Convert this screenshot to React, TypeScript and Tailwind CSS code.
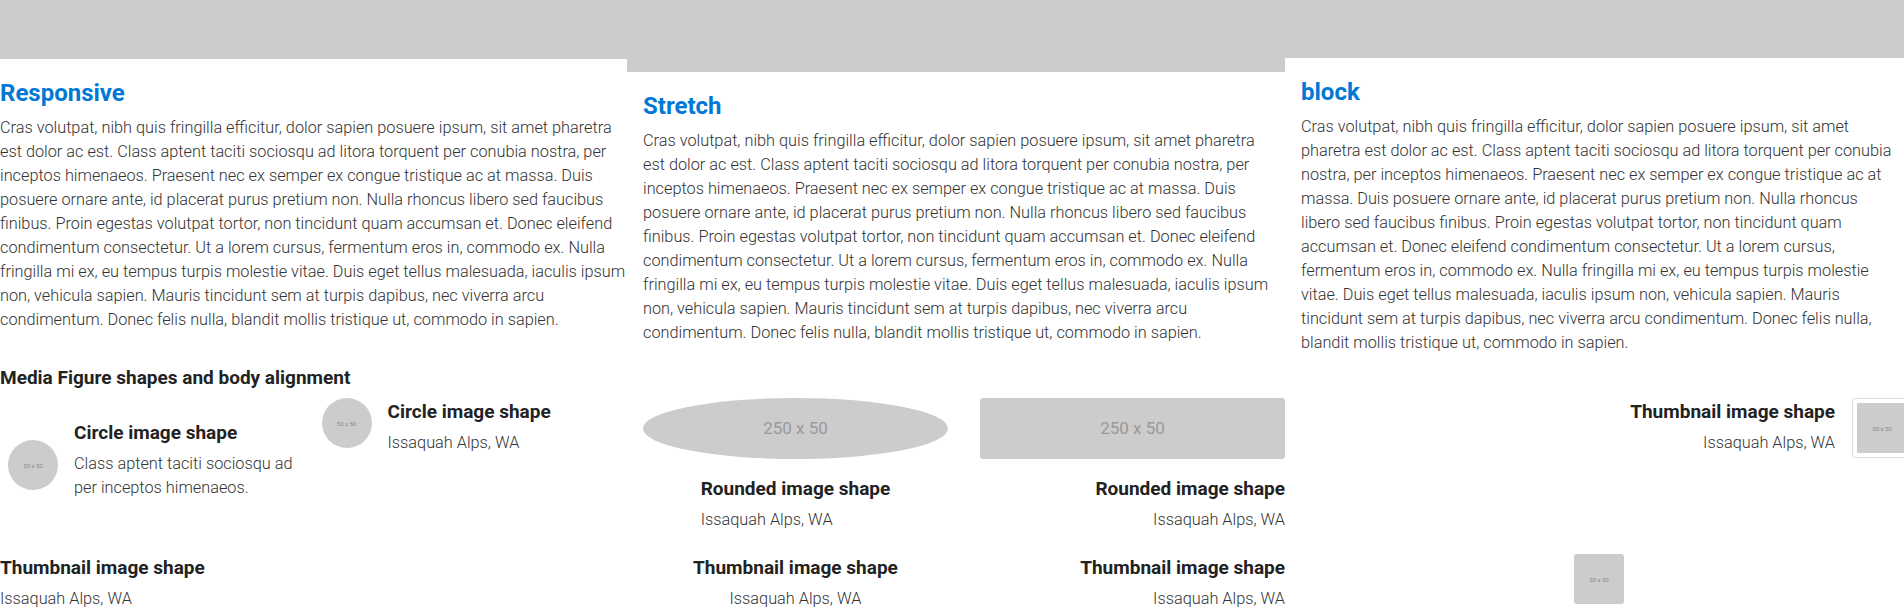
import React from "react";

const PARA =
  "Cras volutpat, nibh quis fringilla efficitur, dolor sapien posuere ipsum, sit amet pharetra est dolor ac est. Class aptent taciti sociosqu ad litora torquent per conubia nostra, per inceptos himenaeos. Praesent nec ex semper ex congue tristique ac at massa. Duis posuere ornare ante, id placerat purus pretium non. Nulla rhoncus libero sed faucibus finibus. Proin egestas volutpat tortor, non tincidunt quam accumsan et. Donec eleifend condimentum consectetur. Ut a lorem cursus, fermentum eros in, commodo ex. Nulla fringilla mi ex, eu tempus turpis molestie vitae. Duis eget tellus malesuada, iaculis ipsum non, vehicula sapien. Mauris tincidunt sem at turpis dapibus, nec viverra arcu condimentum. Donec felis nulla, blandit mollis tristique ut, commodo in sapien.";

function Title({ children }: { children: React.ReactNode }) {
  return (
    <h2 className="mt-[20px] text-[24px] leading-[29px] font-bold text-[#0078d4]">
      {children}
    </h2>
  );
}

function Para() {
  return <p className="mt-[8px] text-[16.3px] leading-[24px] font-light text-[#333]">{PARA}</p>;
}

function MTitle({ children }: { children: React.ReactNode }) {
  return <div className="text-[19px] leading-[28px] font-bold text-[#222]">{children}</div>;
}

function MText({ children }: { children: React.ReactNode }) {
  return <div className="mt-[5px] text-[16.3px] leading-[24px] font-light text-[#333]">{children}</div>;
}

function Small50({ className }: { className: string }) {
  return (
    <div className={"flex shrink-0 items-center justify-center bg-[#ccc] text-[6px] text-[#8a8a8a] " + className}>
      50 x 50
    </div>
  );
}

export default function App() {
  return (
    <div className="w-full overflow-hidden bg-white font-[Roboto,sans-serif] text-[#333]">
      <div className="grid grid-cols-[627px_658px_619px]">
        {/* Row 1 */}
        <div>
          <div className="h-[59px] bg-[#ccc]" />
          <Title>Responsive</Title>
          <Para />
        </div>
        <div>
          <div className="h-[72px] bg-[#ccc]" />
          <div className="px-4">
            <Title>Stretch</Title>
            <Para />
          </div>
        </div>
        <div>
          <div className="h-[58px] bg-[#ccc]" />
          <div className="pl-4 pr-[6px]">
            <Title>block</Title>
            <Para />
          </div>
        </div>

        {/* Row 2 */}
        <div className="col-start-1 mt-[9px] pb-[6px]">
          <h3 className="text-[19px] leading-[28px] font-bold text-[#222]">
            Media Figure shapes and body alignment
          </h3>
        </div>

        {/* Row 3 */}
        <div className="col-start-1 grid grid-cols-2">
          <div className="flex items-start">
            <Small50 className="ml-2 mr-4 mt-[42px] h-[50px] w-[50px] rounded-full" />
            <div className="mt-[21px] flex-1">
              <MTitle>Circle image shape</MTitle>
              <MText>Class aptent taciti sociosqu ad per inceptos himenaeos.</MText>
            </div>
          </div>
          <div className="flex items-start">
            <Small50 className="ml-2 mr-4 h-[50px] w-[50px] rounded-full" />
            <div className="flex-1">
              <MTitle>Circle image shape</MTitle>
              <MText>Issaquah Alps, WA</MText>
            </div>
          </div>
        </div>
        <div className="pl-4">
          <div className="grid grid-cols-2">
            <div className="flex w-[95%] flex-col items-center">
              <div className="flex h-[61px] w-full items-center justify-center rounded-[50%] bg-[#ccc] text-[17px] text-[#999]">
                250 x 50
              </div>
              <div className="mt-4 text-left">
                <MTitle>Rounded image shape</MTitle>
                <MText>Issaquah Alps, WA</MText>
              </div>
            </div>
            <div className="flex flex-col items-end">
              <div className="flex h-[61px] w-[95%] items-center justify-center rounded-[3px] bg-[#ccc] text-[17px] text-[#999]">
                250 x 50
              </div>
              <div className="mt-4 text-right">
                <MTitle>Rounded image shape</MTitle>
                <MText>Issaquah Alps, WA</MText>
              </div>
            </div>
          </div>
        </div>
        <div className="pl-4">
          <div className="grid grid-cols-2">
            <div />
            <div className="flex items-start justify-end">
              <div className="text-right">
                <MTitle>Thumbnail image shape</MTitle>
                <MText>Issaquah Alps, WA</MText>
              </div>
              <div className="ml-[17px] mr-[-8px] shrink-0 rounded-[3px] border border-[#ddd] bg-white p-[4px]">
                <Small50 className="h-[50px] w-[50px]" />
              </div>
            </div>
          </div>
        </div>

        {/* Row 4 */}
        <div className="col-start-1 mt-[22px]">
          <MTitle>Thumbnail image shape</MTitle>
          <MText>Issaquah Alps, WA</MText>
        </div>
        <div className="mt-[22px] pl-4">
          <div className="grid grid-cols-2">
            <div className="w-[95%] text-center">
              <MTitle>Thumbnail image shape</MTitle>
              <MText>Issaquah Alps, WA</MText>
            </div>
            <div className="text-right">
              <MTitle>Thumbnail image shape</MTitle>
              <MText>Issaquah Alps, WA</MText>
            </div>
          </div>
        </div>
        <div className="mt-[22px] pl-4">
          <Small50 className="ml-[273px] h-[50px] w-[50px] rounded-[3px]" />
        </div>
      </div>
    </div>
  );
}
